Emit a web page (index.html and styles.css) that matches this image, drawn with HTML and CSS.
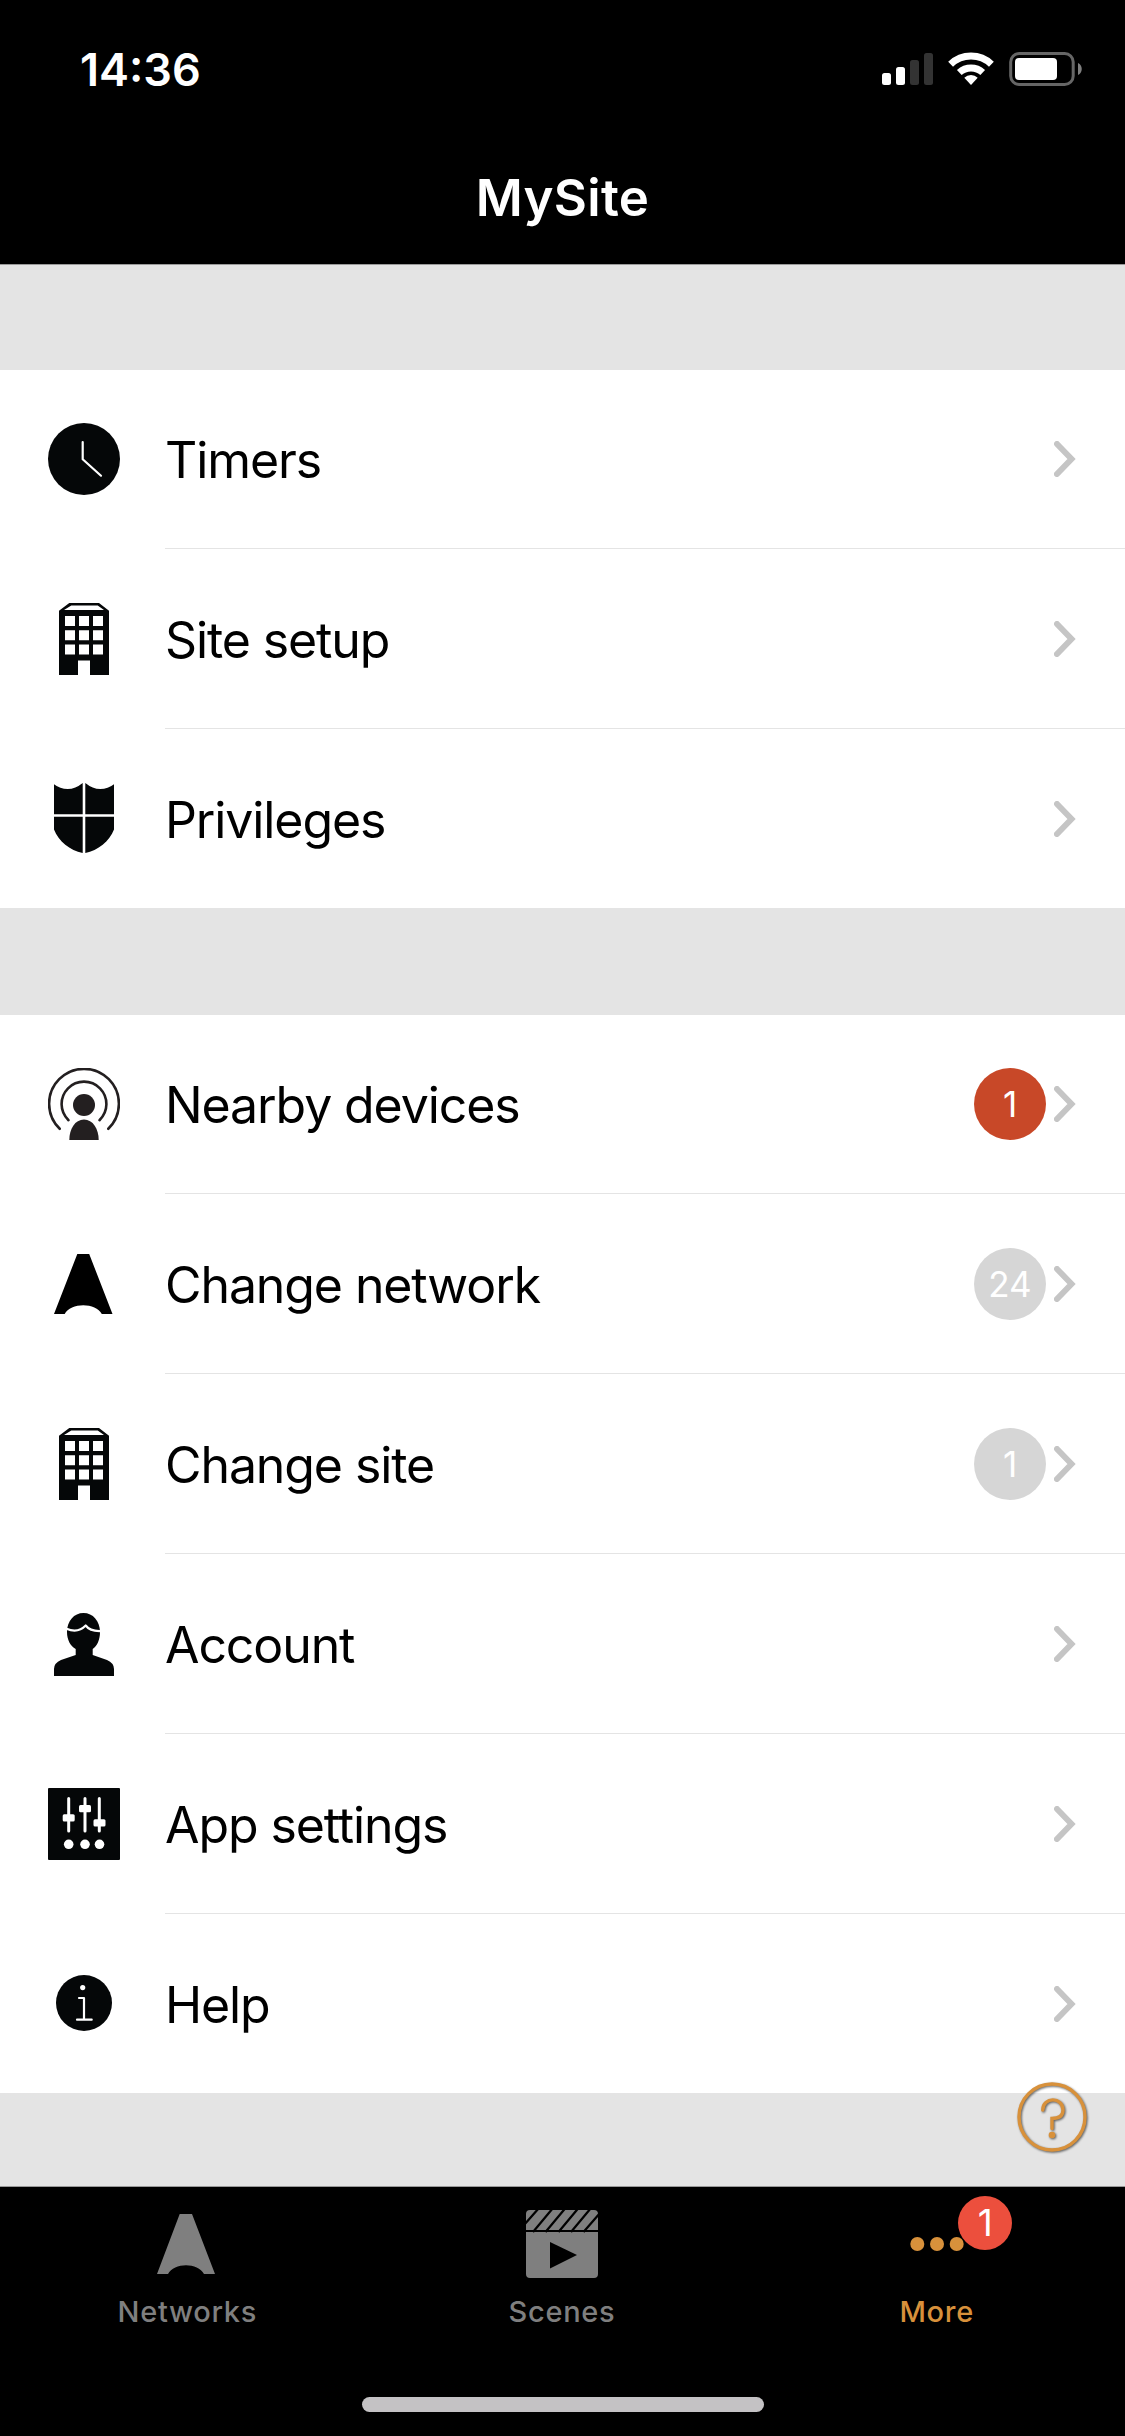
FILE: index.html
```html
<!DOCTYPE html>
<html lang="en">
<head>
    <meta charset="UTF-8">
    <title>MySite</title>
    <meta name="viewport" content="width=device-width, initial-scale=1">
    <link rel="stylesheet" href="styles.css">
</head>
<body>
    <svg class="defs" width="0" height="0">
        <symbol id="building" viewBox="0 0 72 72">
            <path fill-rule="evenodd" d="M21.3 0H51L61 7.7V72H42V57.6H30V72H11V7.7zM23.3 2.5L16 7H56L49.7 2.5zM17 13v10h10V13zM31 13v10h10V13zM45 13v10h10V13zM17 27.3v10h10v-10zM31 27.3v10h10v-10zM45 27.3v10h10v-10zM17 41.6v10h10v-10zM31 41.6v10h10v-10zM45 41.6v10h10v-10z"/>
        </symbol>
        <symbol id="arrow" viewBox="0 0 22 36">
            <path d="M3 3L17.500 18L3 33"/>
        </symbol>
    </svg>

    <div class="header">
        <div class="status">
            <span class="time">14:36</span>
            <svg class="signal" viewBox="0 0 220 36" width="220" height="36">
                <rect x="0" y="21" width="9" height="12" rx="2.5" fill="#fff"/>
                <rect x="14" y="15" width="9" height="18" rx="2.5" fill="#fff"/>
                <rect x="28" y="8" width="9" height="25" rx="2.5" fill="#333"/>
                <rect x="42" y="1" width="9" height="32" rx="2.5" fill="#333"/>
                <g fill="none" stroke="#fff">
                    <path stroke-width="7" d="M68.6 12.2A29.5 29.5 0 0 1 109.4 12.2"/>
                    <path stroke-width="7" d="M77.3 20.5A17.5 17.5 0 0 1 100.7 20.5"/>
                </g>
                <path fill="#fff" d="M82.3 25.8a9.6 9.6 0 0 1 13.4 0L89 33z"/>
                <rect x="128.700" y="1.500" width="62.500" height="31" rx="8.500" fill="none" stroke="#666" stroke-width="3"/>
                <rect x="133" y="6" width="42" height="22" rx="4" fill="#fff"/>
                <path fill="#7f7f7f" d="M196 11c5 2 5 10 0 12z"/>
            </svg>
        </div>
        <div class="title">MySite</div>
    </div>

    <div class="list">
        <div class="row">
            <svg class="icon" viewBox="0 0 72 72">
                <circle cx="36" cy="36" r="36"/>
                <path class="line" d="M34.700 19V36.300L53 52.700"/>
            </svg>
            <div class="cell"><span class="label">Timers</span><svg class="arrow"><use href="#arrow"/></svg></div>
        </div>
        <div class="row">
            <svg class="icon"><use href="#building"/></svg>
            <div class="cell"><span class="label">Site setup</span><svg class="arrow"><use href="#arrow"/></svg></div>
        </div>
        <div class="row">
            <svg class="icon" viewBox="0 0 72 72">
                <path d="M6 2.300Q12 7 19.700 7T34.700 1V32.300H6zM66 2.300Q60 7 52.300 7T37.300 1V32.300H66zM6 34.700H34.700V71C22 68.500 10.500 59 6 47.400zM66 34.700H37.300V71C50 68.500 61.500 59 66 47.400z"/>
            </svg>
            <div class="cell"><span class="label">Privileges</span><svg class="arrow"><use href="#arrow"/></svg></div>
        </div>
    </div>

    <div class="list">
        <div class="row">
            <svg class="icon nearby" viewBox="0 0 72 72">
                <path class="wave" d="M11.700 60.800A34.900 34.900 0 1 1 60.300 60.800"/>
                <path class="wave" d="M20.500 52.200A22.400 22.400 0 1 1 51.500 52.200"/>
                <circle cx="36" cy="37" r="11"/>
                <path d="M21.300 72C21.300 61 27 51.500 36 51.500S50.700 61 50.700 72z"/>
            </svg>
            <div class="cell"><span class="label">Nearby devices</span><span class="count red">1</span><svg class="arrow"><use href="#arrow"/></svg></div>
        </div>
        <div class="row">
            <svg class="icon network" viewBox="0 0 72 72">
                <path d="M29.300 6H41.200L64.500 66H53.800C48 54.200 22.500 54.200 16.700 66H6z"/>
            </svg>
            <div class="cell"><span class="label">Change network</span><span class="count">24</span><svg class="arrow"><use href="#arrow"/></svg></div>
        </div>
        <div class="row">
            <svg class="icon"><use href="#building"/></svg>
            <div class="cell"><span class="label">Change site</span><span class="count">1</span><svg class="arrow"><use href="#arrow"/></svg></div>
        </div>
        <div class="row">
            <svg class="icon" viewBox="0 0 72 72">
                <path d="M35.500 5C45 5 52 13 52 24C52 32 49 38 44.700 41V47L59 52Q66 55 66 61V68H6V61Q6 55 13 52L27.700 47V41C22.500 38 19 32 19 24C19 13 26 5 35.500 5z"/>
                <path class="line" d="M18.500 20.800Q30 25.500 37.700 17.500Q42 23.500 53 23"/>
            </svg>
            <div class="cell"><span class="label">Account</span><svg class="arrow"><use href="#arrow"/></svg></div>
        </div>
        <div class="row">
            <svg class="icon" viewBox="0 0 72 72">
                <rect width="72" height="72" rx="1"/>
                <path class="line slider" d="M20.700 10.500V43M37 10.500V43M51.300 10.500V43"/>
                <g fill="#fff">
                    <rect x="14.700" y="26.300" width="12" height="7.300" rx="1.500"/>
                    <rect x="31" y="17" width="12" height="7.300" rx="1.500"/>
                    <rect x="45.500" y="31.200" width="12" height="7.300" rx="1.500"/>
                    <circle cx="20.700" cy="56.300" r="4.800"/>
                    <circle cx="37" cy="56.300" r="4.800"/>
                    <circle cx="51.500" cy="56.300" r="4.800"/>
                </g>
            </svg>
            <div class="cell"><span class="label">App settings</span><svg class="arrow"><use href="#arrow"/></svg></div>
        </div>
        <div class="row">
            <svg class="icon" viewBox="0 0 72 72">
                <circle cx="36" cy="36" r="28"/>
                <circle cx="34.700" cy="20.600" r="2.600" fill="#fff"/>
                <path class="line" d="M31 31H36V52.700M29 52.700H43.700"/>
            </svg>
            <div class="cell"><span class="label">Help</span><svg class="arrow"><use href="#arrow"/></svg></div>
        </div>
    </div>

    <!-- floating help button -->
    <svg class="tip" viewBox="0 0 80 80">
        <circle cx="40" cy="40" r="33"/>
        <path d="M30.700 33C30.700 19.500 51 19.500 51 33C51 40 46 41.500 40 41.500V51.500"/>
        <circle class="dot" cx="40" cy="58" r="3.300"/>
    </svg>

    <div class="tabs">
        <div class="tab">
            <svg class="tab-icon" viewBox="0 0 80 80">
                <path d="M32.700 11H45L68 71H57C51 59.300 27 59.300 21 71H10z"/>
            </svg>
            <span>Networks</span>
        </div>
        <div class="tab">
            <svg class="tab-icon" viewBox="0 0 80 80">
                <path d="M8 7H72Q76 7 76 11V27H4V11Q4 7 8 7zM4 29H76V71Q76 75 72 75H8Q4 75 4 71z"/>
                <path fill="#000" d="M28 39L55 52L28 65.500z"/>
                <path class="stripe" d="M2 22L17 5M11 29L31 5M23.500 29L43.500 5M36.500 29L56.500 5M49 29L69 5M61.500 29L78 10"/>
            </svg>
            <span>Scenes</span>
        </div>
        <div class="tab active">
            <svg class="tab-icon" viewBox="0 0 80 80">
                <circle cx="20.300" cy="41" r="7"/>
                <circle cx="40" cy="41" r="7"/>
                <circle cx="59.700" cy="41" r="7"/>
            </svg>
            <span>More</span>
            <b class="dot-count">1</b>
        </div>
    </div>
    <div class="home"><div class="home-bar"></div></div>
</body>
</html>
```
FILE: styles.css
```css
*{
    box-sizing: border-box;
}
body{
    margin: 0;
    width: 1125px;
    height: 2436px;
    overflow: hidden;
    position: relative;
    display: flex;
    flex-direction: column;
    background: #e4e4e4;
    font-family: Inter, "Liberation Sans", sans-serif;
    color: #000;
}
.defs{
    position: absolute;
}
.header{
    height: 265px;
    background: #000;
    border-bottom: 1px solid #999;
    color: #fff;
}
.status{
    height: 132px;
    padding: 6px 23px 0 80px;
    display: flex;
    align-items: center;
    justify-content: space-between;
}
.signal{
    margin-top: 2px;
}
.time{
    font-size: 45px;
    font-weight: 600;
}
.title{
    height: 132px;
    line-height: 131px;
    text-align: center;
    font-size: 51px;
    font-weight: 600;
    letter-spacing: .3px;
}
.list{
    margin-top: 105px;
    background: #fff;
}
.header + .list{
    margin-top: 104px;
}
.list .row:first-child{
    border-top: 1px solid #e4e4e4;
}
.row{
    height: 180px;
    display: flex;
    align-items: center;
}
.icon{
    width: 72px;
    height: 72px;
    margin: 0 45px 1px 48px;
    fill: #050708;
}
.nearby{
    fill: #231f20;
}
.network{
    fill: #000;
}
.line{
    fill: none;
    stroke: #fff;
    stroke-width: 2.2;
    stroke-linecap: round;
    stroke-linejoin: round;
}
.slider{
    stroke-width: 3;
}
.wave{
    fill: none;
    stroke: #231f20;
    stroke-width: 2.6;
    stroke-linecap: round;
}
.cell{
    flex: 1;
    align-self: stretch;
    display: flex;
    align-items: center;
    border-bottom: 1px solid #e4e4e4;
    padding-right: 49px;
}
.label{
    flex: 1;
    padding-top: 2px;
    font-size: 50px;
    letter-spacing: -1.1px;
}
.list .row:last-child{
    border-bottom: 1px solid #e4e4e4;
}
.list .row:last-child .cell{
    border-bottom: 0;
}
.count{
    width: 72px;
    height: 72px;
    line-height: 73px;
    margin-right: 8px;
    border-radius: 50%;
    background: #d6d6d6;
    color: #fff;
    font-size: 35px;
    text-align: center;
}
.red{
    background: #c84828;
}
.arrow{
    width: 22px;
    height: 36px;
    overflow: visible;
    fill: none;
    stroke: #c5c5c5;
    stroke-width: 6;
    stroke-linecap: round;
}
.tip{
    position: absolute;
    left: 1012px;
    top: 2077px;
    width: 80px;
    height: 80px;
    fill: none;
    stroke: #d8913b;
    stroke-width: 3.4;
    stroke-linecap: round;
    filter: drop-shadow(1px 1px 1px rgba(0, 0, 0, .6));
}
.tip .dot{
    fill: #d8913b;
    stroke: none;
}
.tabs{
    margin-top: 92px;
    height: 160px;
    padding-right: 1px;
    display: flex;
    background: #000;
    border-top: 1px solid #999;
}
.tab{
    position: relative;
    flex: 1;
    display: flex;
    flex-direction: column;
    align-items: center;
    padding-top: 16px;
    color: #7f7f7f;
    fill: #7f7f7f;
    font-size: 29px;
    font-weight: 500;
    letter-spacing: .7px;
}
.tab-icon{
    width: 80px;
    height: 80px;
}
.tab span{
    margin-top: 11px;
}
.stripe{
    fill: none;
    stroke: #000;
    stroke-width: 2.2;
}
.active{
    color: #d8913b;
    fill: #d8913b;
}
.dot-count{
    position: absolute;
    left: 209px;
    top: 9px;
    width: 54px;
    height: 54px;
    line-height: 54px;
    border-radius: 50%;
    background: #ec4f3d;
    color: #fff;
    font-size: 37px;
    font-weight: 400;
    letter-spacing: 0;
    text-align: center;
}
.home{
    flex: 1;
    display: flex;
    justify-content: center;
    align-items: flex-start;
    padding-top: 51px;
    background: #000;
}
.home-bar{
    width: 402px;
    height: 15px;
    border-radius: 8px;
    background: #c4c2c4;
}
```
